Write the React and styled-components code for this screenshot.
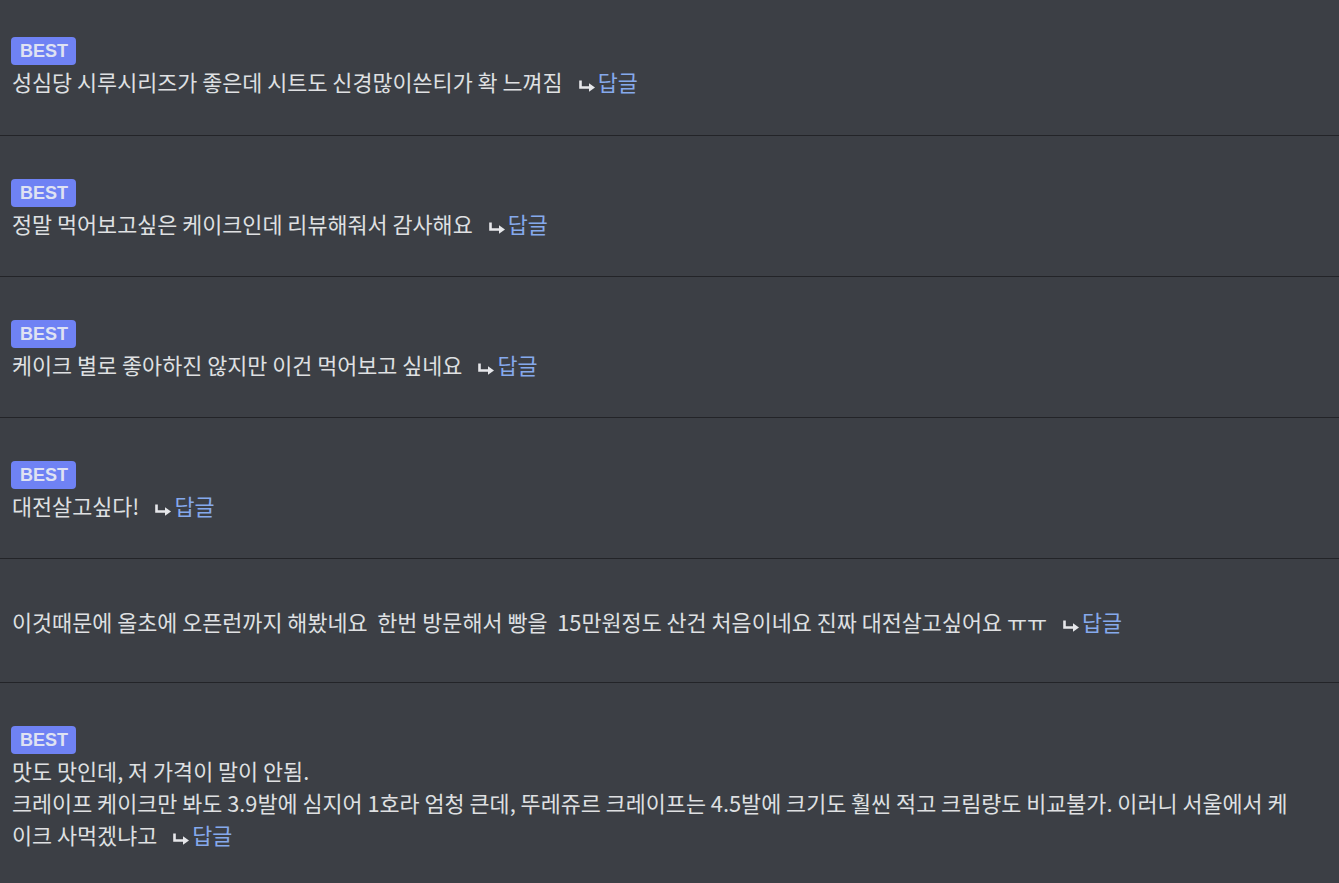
import React from "react";
import styled, { createGlobalStyle } from "styled-components";

const GlobalStyle = createGlobalStyle`
  html, body {
    margin: 0;
    padding: 0;
    background-color: #3c3f45;
  }
  body {
    font-family: "Noto Sans CJK KR", "Noto Sans", sans-serif;
    color: #dcddde;
  }
`;

const comments = [
  { id: 1, best: true, text: "성심당 시루시리즈가 좋은데 시트도 신경많이쓴티가 확 느껴짐" },
  { id: 2, best: true, text: "정말 먹어보고싶은 케이크인데 리뷰해줘서 감사해요" },
  { id: 3, best: true, text: "케이크 별로 좋아하진 않지만 이건 먹어보고 싶네요" },
  { id: 4, best: true, text: "대전살고싶다!" },
  {
    id: 5,
    best: false,
    text: "이것때문에 올초에 오픈런까지 해봤네요  한번 방문해서 빵을  15만원정도 산건 처음이네요 진짜 대전살고싶어요 ㅠㅠ",
  },
  {
    id: 6,
    best: true,
    text: "맛도 맛인데, 저 가격이 말이 안됨.\n크레이프 케이크만 봐도 3.9발에 심지어 1호라 엄청 큰데, 뚜레쥬르 크레이프는 4.5발에 크기도 훨씬 적고 크림량도 비교불가. 이러니 서울에서 케이크 사먹겠냐고",
  },
];

const ReplyArrow = () => (
  <ArrowSvg width="18" height="12" viewBox="0 0 18 12">
    <path d="M2.5 0.5 V7.5 H12" fill="none" stroke="#e6e7ea" strokeWidth="2.6" />
    <path d="M11 3.2 L17 7.5 L11 11.8 Z" fill="#e6e7ea" />
  </ArrowSvg>
);

const CommentItem = ({ best, text }) => {
  return (
    <Item best={best}>
      {best && (
        <BadgeRow>
          <Badge>BEST</Badge>
        </BadgeRow>
      )}
      <Content>
        {text}
        <Reply>
          <ReplyArrow />
          <ReplyLink>답글</ReplyLink>
        </Reply>
      </Content>
    </Item>
  );
};

const App = () => {
  return (
    <React.Fragment>
      <GlobalStyle />
      <List>
        {comments.map((c) => (
          <CommentItem key={c.id} best={c.best} text={c.text} />
        ))}
      </List>
    </React.Fragment>
  );
};

const List = styled.ul`
  list-style: none;
  margin: 0;
  padding: 0;
  width: 100%;
`;

const Item = styled.li.withConfig({ shouldForwardProp: (p) => p !== "best" })`
  padding: ${(props) => (props.best ? "43px 50px 36px 12px" : "47px 50px 44px 12px")};
  border-bottom: 1px solid #232428;

  &:first-child {
    padding-top: 37px;
    padding-bottom: 37px;
  }
`;

const BadgeRow = styled.div`
  display: flex;
  height: 28px;
  margin-left: -1px;
  margin-bottom: 1px;
`;

const Badge = styled.span`
  display: inline-flex;
  align-items: center;
  height: 28px;
  padding: 0 8px 0 9px;
  border-radius: 4px;
  background-color: #6f82f4;
  color: #dfe2f2;
  font-family: "Liberation Sans", Arial, sans-serif;
  font-weight: 700;
  font-size: 18px;
  line-height: 1;
`;

const Content = styled.p`
  margin: 0;
  font-size: 21.8px;
  line-height: 32px;
  white-space: pre-wrap;
  color: #dfe0e2;
`;

const Reply = styled.span`
  margin-left: 15px;
  white-space: nowrap;
`;

const ArrowSvg = styled.svg`
  display: inline-block;
  vertical-align: -1px;
  margin-right: 2px;
`;

const ReplyLink = styled.span`
  color: #86a9ec;
  cursor: pointer;
`;

export default App;
